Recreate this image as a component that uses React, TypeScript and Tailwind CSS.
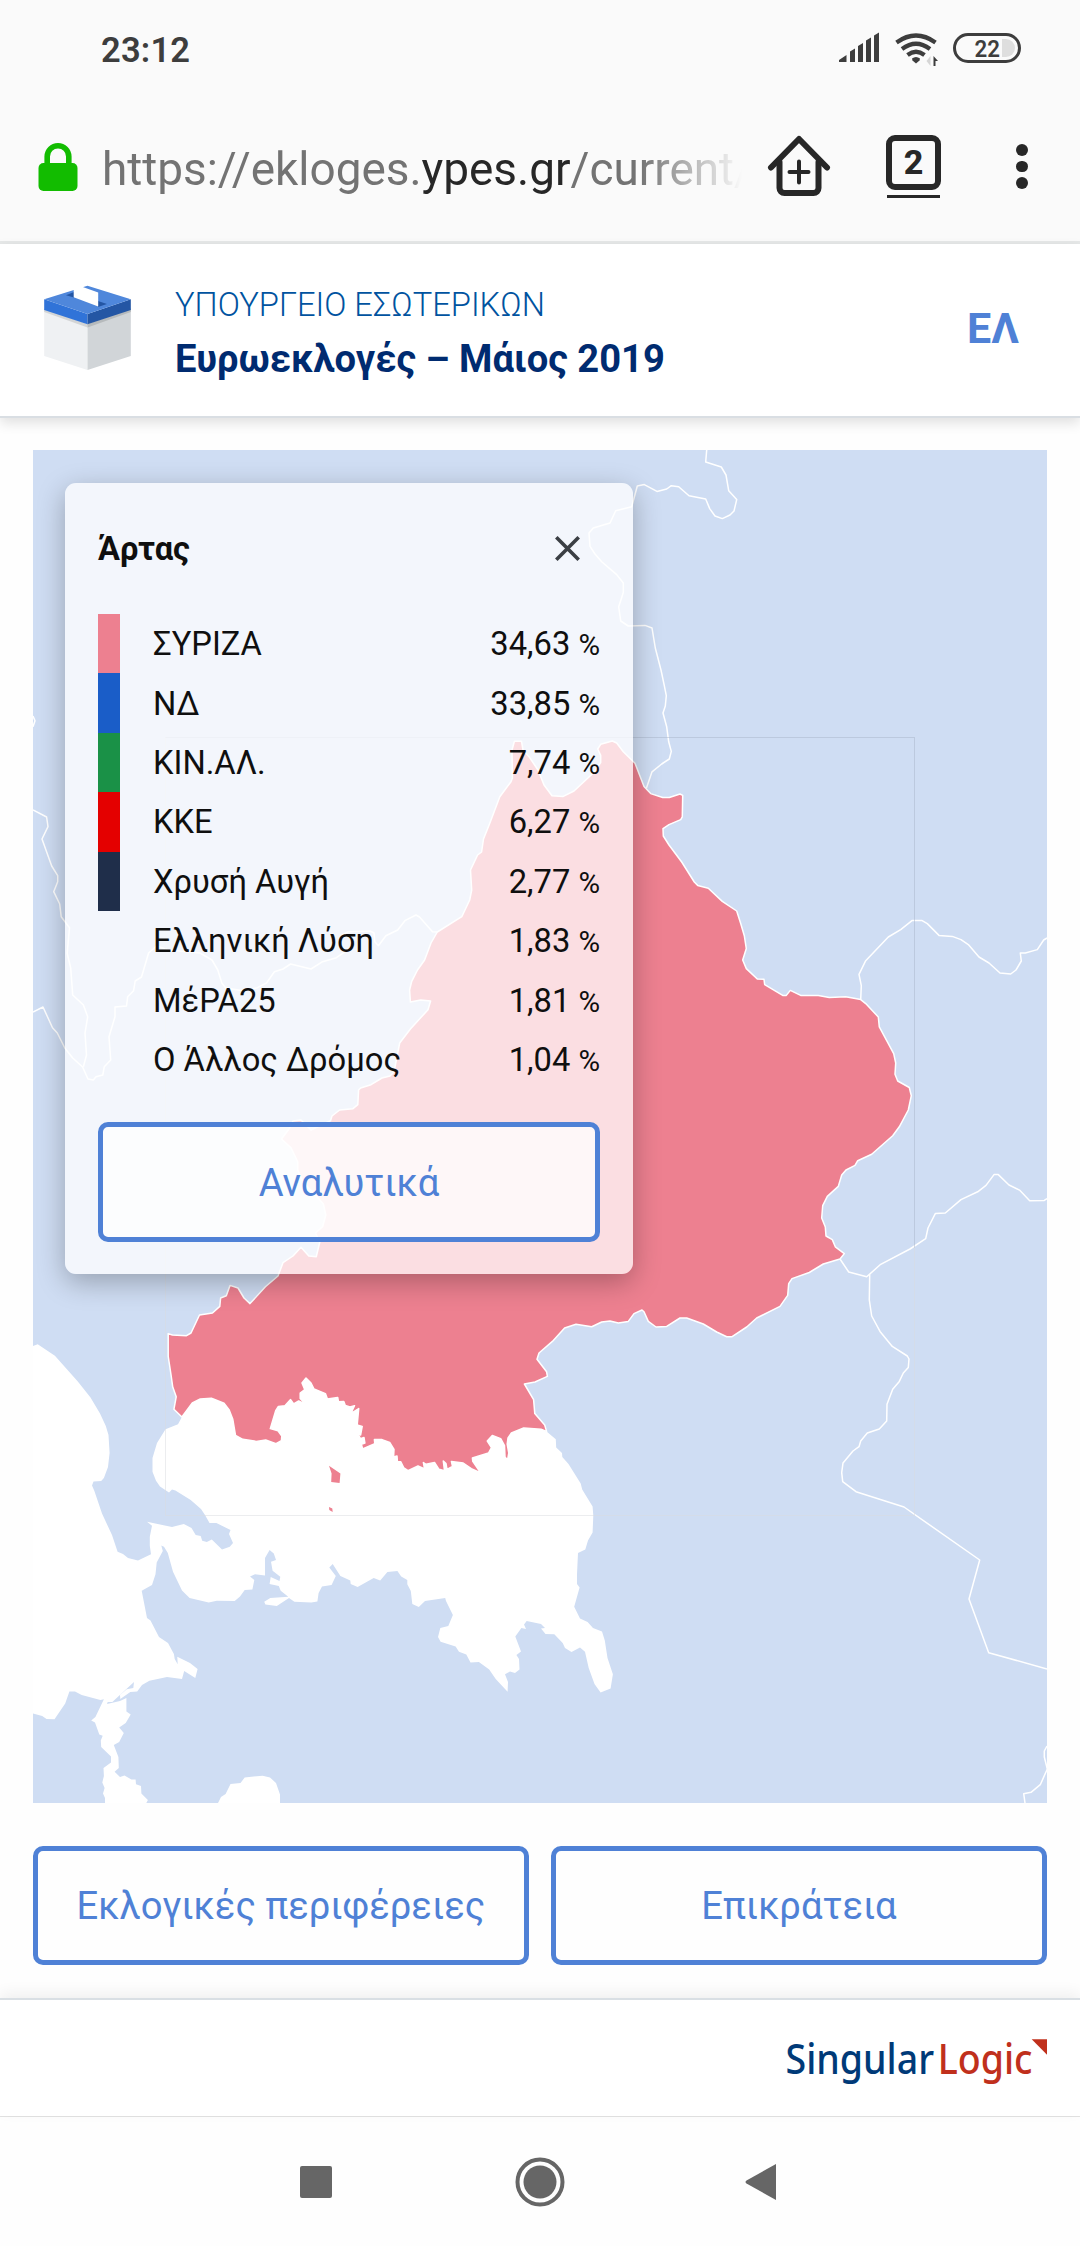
import { clsx } from "clsx";

type Result = {
  party: string;
  percent: string;
  color: string;
};

const results: Result[] = [
  { party: "ΣΥΡΙΖΑ", percent: "34,63", color: "bg-[#ed8090]" },
  { party: "ΝΔ", percent: "33,85", color: "bg-[#1a5dc8]" },
  { party: "ΚΙΝ.ΑΛ.", percent: "7,74", color: "bg-[#1a9147]" },
  { party: "ΚΚΕ", percent: "6,27", color: "bg-[#e40000]" },
  { party: "Χρυσή Αυγή", percent: "2,77", color: "bg-[#1f2e4a]" },
  { party: "Ελληνική Λύση", percent: "1,83", color: "" },
  { party: "ΜέΡΑ25", percent: "1,81", color: "" },
  { party: "Ο Άλλος Δρόμος", percent: "1,04", color: "" },
];

// selected district
const artas =
  "514.4,741.3 521.5,741.3 523,750 529,756.7 538,770 544,785 552,795.7 562.8,796.6 574,791 593.3,773 600.7,762.5 600.7,755.4 597.7,749 600.7,744.3 612.3,741 616.7,743 623.3,751.8 635,763.2 644,786.4 650.7,793.6 662.7,797.5 669.3,797.5 680,794 682.7,795.4 682.3,816.8 680.7,819.6 669,824.6 663,828.6 663.3,836 669,845 681.7,862 694.3,882 697.7,885.4 708.3,888.2 722.3,901.4 736.7,911 740.7,923.6 744.3,935.7 746.3,948.6 742.7,960 746.3,968.6 757.3,979 764,979.3 764.7,984.6 782.7,995.4 786.3,995.4 790.3,990.4 800.7,995.4 818.3,995.4 829.3,997.5 845.7,996.8 860.7,999.6 865.7,1003.6 878.3,1017 879.3,1026.8 893.7,1053.6 895.7,1063 895,1074.3 897.7,1081 909.3,1087.5 911.3,1095.7 908.3,1110 899.3,1126.8 892.7,1135.7 871.7,1154.3 857.7,1160.7 855,1165.4 846,1170 841.7,1175 838.3,1186.4 827.3,1196.4 822.7,1205.7 821.7,1218 825.3,1227 826,1236 832.3,1239.6 835.3,1246.8 844.3,1253.6 840,1259 823.3,1264 809.3,1272.5 792,1278.6 788.7,1283.6 787.7,1295.4 780,1306.4 756.7,1318 746.7,1327 731.7,1336.8 726.7,1336.8 716.7,1332 703.3,1324 686.7,1318 680,1318 666.7,1326.4 656,1327 648.3,1321.4 644,1311.8 642,1310 634,1313.6 628.3,1321.4 618.3,1323 610,1321 601.7,1322 591.7,1326.8 576,1324.3 564.6,1328 552.4,1341.4 539,1353 537,1359.3 546.6,1371.8 547.4,1376.4 535,1382 524.4,1384 533.6,1399.6 534.8,1413.6 544.7,1425 546.6,1431.4 541,1429.3 523.7,1428 511.4,1433 508,1438 507.2,1444 508.8,1453 507.6,1460 505,1457 504.5,1445.7 500.7,1438.6 492.3,1435.4 487.3,1441 491.5,1447.5 488.5,1453 472.4,1458 472.8,1461.4 480.8,1473 471.3,1468.6 463.2,1463 451.4,1461.4 452.5,1466.4 447,1469.3 446,1463.6 443.3,1461 444.5,1470.7 439,1469.3 434.5,1462.5 426,1464.3 423.4,1462.5 424.6,1469 418,1466 408,1470.7 403.9,1468 400.8,1461.8 397.4,1461.4 397,1456 393.6,1457 394,1449.3 389.7,1442.5 382,1439.6 374.4,1439.6 374.8,1443.6 362.6,1449 361.4,1444.3 364.9,1443 364,1437.5 360.3,1438.6 356.4,1430 360.6,1435 362.2,1426.4 357.2,1425 358.7,1408.6 350.7,1413.6 354.5,1405.7 350,1407 345.3,1405.4 343.8,1401.4 338.5,1401.8 337.7,1397.5 327.4,1399 325.4,1393.6 314,1389 311,1383 306,1378 302,1383 304.8,1389.6 300.2,1393.2 300.2,1398.6 305.5,1404.3 298.7,1401 293.7,1404 290.6,1399.6 284.9,1405.7 278.4,1406.4 275.7,1410.7 270.3,1428.6 278,1430.7 281.8,1436 281.4,1440.7 276,1443.6 265.7,1440 256.2,1441.4 242.8,1439.3 235.5,1435.4 232.8,1419.3 229,1409.6 224,1403.2 211.4,1398.2 200.3,1399 192.3,1403 181.9,1417 173.9,1409.3 176.2,1396.8 172.7,1386.8 171.2,1376 168.2,1356.4 168.2,1333.6 172.4,1335 186.5,1335.7 191,1333 199.5,1315 212.5,1313 219.8,1306.4 220.6,1298 226.3,1295.7 230,1285.4 238,1288 244,1298 250,1303.6 265.4,1286.8 278,1276 283,1262.7 293,1256 301,1247.3 308.8,1256 316.3,1256.7 319.8,1242 315.5,1233 322.6,1226.7 325.8,1215 323.4,1204 315.5,1195 303,1182 297.7,1170 297.7,1161.7 291,1147.7 281.5,1139 289,1129 293,1121 301,1120 311,1130 330.5,1120.7 332,1116 339.6,1110 353,1108.7 357.8,1104.7 358.6,1090 360.6,1088 371,1084.7 382,1078 390,1076 394,1072 399.7,1043 410.4,1029 428,1009.7 430.6,1001 420.7,1000 410.4,1002 409.6,990 411.6,981.7 417.5,970 424.6,960 431,943 437.3,932 461.8,916.7 469.7,900 471.7,890 470.5,870 477.6,855 481.6,852 483.5,839 489.9,823 499.8,796.7 511,781.7 512.4,778 512,750";

// Ionian sea and the gulf
const sea =
  "181.9,1417 178,1424.3 165.5,1429.3 157,1443 152.5,1458 152.5,1471.8 156,1480.7 160,1486.4 169,1492.5 172,1489.6 175.4,1490.4 190.7,1500 201,1509 205,1515 209.5,1523 216.4,1523 230.5,1530 229,1534 233,1543 229.8,1546.8 222,1549.6 211.8,1539.6 206.8,1542 202.2,1540.7 200.7,1536 195.7,1535 191.5,1528 183.8,1524 172,1527 147,1521.8 152,1525.7 149.8,1536.8 149.8,1545.7 151,1554.3 138,1560.4 128,1558 123,1554 117.6,1551.8 112,1535 102,1513.6 94.3,1490.7 92,1485.4 93.5,1481.4 101.2,1481 103.9,1478 108,1467 109.6,1453 108.5,1435 105.8,1426 100,1413.6 90.5,1397.5 77.8,1381.4 54.9,1355.7 37.7,1344.3 33,1346 33,1713.6 42.2,1716 46.5,1719 54.5,1719.3 65.2,1703.6 69.4,1691.4 75,1691.4 81.7,1695 100.4,1700 103.9,1699.3 95.4,1717 91.2,1720.4 95,1722.5 99.3,1734.6 102.7,1735.7 100.8,1740.4 101.2,1747 111,1756.4 111,1762.5 103.5,1768 103.9,1776 102.3,1782.5 104.6,1788 103,1793.6 105,1798 105,1803 146.3,1803 147.9,1800 141.4,1793.6 141,1786 136,1784.3 135.6,1779.6 131.4,1779.6 124.5,1775.4 120,1777 114.6,1771.8 118.8,1768 118.4,1757 113.8,1745 119.2,1742 123.8,1733 119.2,1727.5 125.7,1723 130.7,1714.6 126.4,1711.4 126.4,1698 120,1701 107,1704 107.7,1702 112.3,1702 124.5,1690.7 134,1682 133.3,1688 126.8,1689.3 120,1695 120.3,1699 130.3,1692 137.2,1691.4 142,1685 149.4,1680.7 167,1677 182,1679 184.2,1671 195.3,1678 197.6,1669 190,1663 177.3,1656.8 177.7,1664.3 174.7,1659 173.9,1654 168,1643 159,1637 150.5,1620.4 147,1618 141.7,1590.7 152,1585 155.5,1574.3 156.7,1562.5 162.8,1551 161.3,1545.4 164,1546.8 167.8,1553 173,1571.8 182,1590.4 189.6,1598 208.7,1602.5 216.8,1600.7 234.7,1601 240,1596.4 244.7,1590 252.4,1589.6 254.3,1580 250,1576.4 255,1574.3 265,1575.4 265,1558 269.6,1550 273.8,1553.6 276,1560 271,1561.8 272.6,1570.7 280.3,1576.8 279.5,1581 270.7,1577 269.6,1584 278.8,1586 280.7,1590.7 288.3,1596.8 270.3,1598 264.2,1601.8 265.4,1604.6 276.8,1606 289,1598 294.4,1601.8 311.3,1602.5 317.4,1601.4 318.6,1593 322,1586.4 331.6,1585 335.8,1576 329.3,1567.5 332.7,1564 340.4,1576 350.3,1580.4 350.7,1584 357.6,1587 373.7,1578 380.2,1580.4 387.4,1572 397.4,1571 401.2,1576.4 407.3,1580 407.3,1584.3 410.8,1591 412.3,1604 418.8,1607 425,1601 445.2,1598 446,1601 452.9,1615 448.3,1626 440.3,1628 438,1637 440.6,1641.8 455.6,1646.4 459,1651.8 466.3,1654.6 470.5,1662.5 478.9,1662 489.2,1669.6 495.7,1679 507.6,1691.8 508,1682 505,1674.3 510,1671.4 515,1673 519.5,1669.6 519,1659 516.4,1655 521,1651.4 515.3,1636.4 521.4,1628 526,1629 524,1624.6 526.7,1621 541,1624 545,1628 541,1628.6 545.5,1634 554.3,1634.3 562.7,1643 565,1648 571.5,1652 580,1647.5 585,1651.8 588.7,1668 594.5,1684 600.6,1692.5 610.6,1688.6 612.9,1674.3 607.5,1658 604.8,1640.4 602,1631.4 593,1628 587.6,1622 580,1618.6 574.2,1606.8 579.6,1587.5 577,1584 577,1574.3 578,1553 585.3,1549.6 588,1540.4 592.6,1532.5 593.3,1515.4 592.6,1506.4 582.2,1489.6 580.7,1483.6 568.5,1464 562.3,1457 562,1453 556.2,1447.5 555.8,1439.3 546.6,1431.4 520,1415 306,1368 200,1388";

const bay =
  "218,1803 221,1797 225.6,1794 230.5,1784 240.5,1783 244.7,1777.5 262.7,1775.7 270,1777.5 276,1783 280,1794.6 280,1803";

// borders between the neighbouring districts
const borders = [
  "33,716 35,720.7 33,726.7",
  "33,810 46.6,817 48,826.7 42,839 51.7,866 57.7,875.7 57.7,881.7 53.7,891.7 59.7,904 61.2,916.7 69.5,927.7 67.2,953.3 70.7,968 72.7,995 83.4,1005 87.7,1016.7 85,1033 86.5,1055 83.4,1066.7",
  "33,1012 43,1007 52.5,1027.7 57.3,1033 64.8,1048 72.7,1058 82.6,1067 88,1079 93.3,1080 96,1076.7 102.8,1075 104.3,1066.7 110.7,1060 109,1036.7 115,1016.7 115,1007 126.5,1006 127.7,996.7 133.6,990.7 135.2,981 141.5,977 148.6,953 156.5,946 168.4,950 200,953 212,960 217.8,970 221.8,983 225.7,988 243.5,990.7 257.4,987.7 266.5,983 274.4,971.7 283,969 290.6,964 311,969 322.6,961.7 336.4,957.7 349,949",
  "437.3,932 432.5,931.7 419.5,917 416,915 404.9,920.7 397.7,930 385.9,935.7 378.4,945.7 374.8,941.7 374,933 370,931 348.3,931.7 342,935",
  "706.7,450 705.7,462 721.3,467 726,475 728.7,490.7 736.7,499.6 734,511 730,515 722.3,518.6 715,516 709.7,508.6 705.7,499 689,495.7 678.7,486.8 671.3,485.7 666.7,489 657,491.4 644.3,484.6 637.3,486 631.7,506.8 615.7,510.7 610,523 593.3,528 589,533 590,546.4 595,554 601.7,561.8 616.7,574.6 623.3,583 623.3,592.5 618.7,606.8 620.7,621 628.3,626 645,625.4 652,628 655.3,648 661,670 664.3,685.7 666.3,695.7 665.3,706 663,713 666.7,726.8 668.7,741.8 671.3,751.4 669.3,759 661.7,764 652,771.8 646.3,788.6",
  "860.7,999.6 861.3,985.7 859,974.3 865.7,960.7 888.3,937 900.7,929.6 912.3,920.4 921.7,920.4 927.3,923.6 939,935.4 952.3,936.4 961,939.6 968.3,944.6 979,957 989,963 1000,973 1010.7,974 1016,970 1021.3,961 1020.3,953 1025.3,953 1037.3,949.6 1043.7,940 1047,938",
  "840,1259 848.7,1272 866.7,1276.8 880.7,1264.3 910,1249 925.7,1238.6 928,1228 935.3,1213.6 945.3,1213 961,1199.6 977.7,1191.8 986,1185.4 994,1174.6 998.3,1174.6 1009,1185 1020,1190.4 1029.7,1200.7 1044.3,1200.4 1047,1198.6",
  "869.7,1274.3 869.3,1300 871.7,1316 880,1331.4 892.3,1346.4 907.3,1356 909,1359 908.3,1367.5 903.3,1373 899.3,1381.4 892.7,1389.3 887,1404.3 886.7,1421 879.3,1429 867.3,1433 860.7,1441 859,1446.7 853,1451 843,1463 841.7,1472.7 842.7,1481.7 856,1491.7 904,1507 979.7,1560 969,1599 988.7,1652.7 1047,1669",
  "1047,1746 1044.3,1751 1044.3,1757 1047.3,1769 1040.3,1784.7 1031,1792.3 1023.7,1793.7 1025,1803",
];

function StatusBar() {
  return (
    <div className="flex h-[96px] items-center justify-between pl-[101px] pr-[59px] pt-[2px] text-[#3d3d3d]">
      <span className="mt-[2px] text-[34.5px] font-semibold leading-none tracking-[0.2px]">
        23:12
      </span>
      <svg width="183" height="36" viewBox="838 31 183 36" fill="none">
        <g fill="#3d3d3d">
          <path d="M839 60 846.500 55v7h-7.500zM850 51.500l5-3v13.500h-5zM858 46l5-3v19h-5zM866 40.500l5-3v24.500h-5zM874 35.500l5-3v29.500h-5z" />
          <path d="M912 58.500q4-3 8 0l-.5 2-3.500 3-3.500-3z" />
        </g>
        <path
          d="M896.500 42.500q19.500-14 39 0M902 49q14-10.500 28 0M907.500 55q8.500-6.500 17 0"
          stroke="#3d3d3d"
          strokeWidth="4.200"
        />
        <path d="M930.500 56v10l-4-5z" fill="#d6d6d6" />
        <path d="M933.500 66V56l4.500 5h-2.500v5z" fill="#3d3d3d" />
        <rect x="954.500" y="34.500" width="65" height="27" rx="13.500" stroke="#3d3d3d" strokeWidth="3" />
        <path d="M1002 39h4a9 9 0 0 1 0 18h-4z" fill="#dedede" />
        <text x="974.500" y="56.700" fontSize="24" fontWeight="600" fill="#3d3d3d" textLength="25.500" lengthAdjust="spacingAndGlyphs">
          22
        </text>
      </svg>
    </div>
  );
}

function AddressBar() {
  return (
    <div className="flex h-[148px] items-center border-b-[3px] border-[#e6e8e8] pb-[6px] text-[#272727]">
      <svg className="ml-[38px]" width="40" height="52" viewBox="0 0 40 52">
        <path d="M9.200 25V16.500a10.800 10.800 0 0 1 21.600 0V25" fill="none" stroke="#12bc00" strokeWidth="5.600" />
        <rect x="0.500" y="23" width="39" height="28" rx="5" fill="#12bc00" />
      </svg>
      <div className="ml-[24px] mt-[7px] w-[640px] overflow-hidden whitespace-nowrap text-[45.900px] leading-[60px] text-[#737373] [mask-image:linear-gradient(to_right,black_84%,transparent_100%)]">
        https://ekloges.<span className="text-[#272727]">ypes.gr</span>/current/
      </div>
      <svg className="ml-[25px]" width="64" height="62" viewBox="0 0 64 62" fill="none" stroke="#272727" strokeLinecap="round" strokeLinejoin="round">
        <path d="M4 32.500 32 4l28 28.500" strokeWidth="6" />
        <path d="M12.500 27v26a5 5 0 0 0 5 5h29a5 5 0 0 0 5-5V27" strokeWidth="6" />
        <path d="M32 26.500v21M22.500 37h19" strokeWidth="4" />
      </svg>
      <div className="ml-[55px] flex flex-col items-center pt-[1px]">
        <div className="flex h-[55px] w-[55px] items-center justify-center rounded-[9px] border-[6px] border-[#272727] text-[34px] font-extrabold leading-none">
          2
        </div>
        <div className="mt-[5px] h-[3px] w-[53px] bg-[#272727]" />
      </div>
      <div className="ml-[75px] mt-[2px] flex flex-col gap-[5px]">
        <span className="h-[11.500px] w-[11.500px] rounded-full bg-[#272727]" />
        <span className="h-[11.500px] w-[11.500px] rounded-full bg-[#272727]" />
        <span className="h-[11.500px] w-[11.500px] rounded-full bg-[#272727]" />
      </div>
    </div>
  );
}

function BallotBox() {
  return (
    <svg className="mb-[4px]" width="88" height="86" viewBox="44 285 88 86">
      <path d="M44.200 308 87.500 323v47L44.200 356z" fill="#eff1f3" />
      <path d="M130.800 308 87.500 323v47l43.300-14z" fill="#d1d5d8" />
      <path d="M44.200 309v3l43.300 15.500V324z" fill="#d3d5d6" />
      <path d="M130.800 309v3L87.500 327.500V324z" fill="#b6babc" />
      <path d="M44.200 299.300 87.500 314v10.300L44.200 310z" fill="#3073d8" />
      <path d="M130.800 299.300 87.500 314v10.300L130.800 310z" fill="#2456a4" />
      <path d="M87.500 285.700 130.800 299.300 87.500 314 44.200 299.300z" fill="#4f87db" />
      <path d="M66 295.300 74 292v5.500zM98 301l9 3-9 3z" fill="#2456a4" />
      <path d="M73.700 285.500 80 286 98.200 292.400v14L73.700 297.300z" fill="#fff" />
    </svg>
  );
}

function SiteHeader() {
  return (
    <header className="relative flex h-[174px] items-center border-b-2 border-[#d9dee3] bg-white pl-[44px] pr-[61px] shadow-[0_5px_12px_rgba(0,0,0,0.12)]">
      <BallotBox />
      <div className="ml-[43px] flex-1 pt-[7px]">
        <div className="text-[32.700px] font-light leading-[42px] text-[#0053a0]">
          ΥΠΟΥΡΓΕΙΟ ΕΣΩΤΕΡΙΚΩΝ
        </div>
        <h1 className="mt-[8px] text-[38.150px] font-bold leading-[50px] text-[#002b70]">
          Ευρωεκλογές – Μάιος 2019
        </h1>
      </div>
      <button className="mb-[3px] text-[43px] font-bold leading-none text-[#4f81d6]">ΕΛ</button>
    </header>
  );
}

function DistrictMap() {
  return (
    <svg className="block" width="1014" height="1353" viewBox="33 450 1014 1353">
      <rect x="33" y="450" width="1014" height="1353" fill="#cfddf3" />
      <polygon points={sea} fill="#fff" />
      <polygon points={bay} fill="#fff" />
      <g fill="none" stroke="#fff" strokeWidth="1.500" strokeLinejoin="round">
        {borders.map((points) => (
          <polyline key={points} points={points} />
        ))}
      </g>
      <polygon points={artas} fill="#ed8090" stroke="#fff" strokeWidth="1.500" strokeLinejoin="round" />
      <path d="M329 1465.700 340.400 1473.600 339.600 1483 331.200 1482 331.600 1473.600zM329 1507l3.300 1.600.4 3.400-3.400-2z" fill="#ed8090" />
      <g fill="none" strokeDasharray="1 1">
        <path d="M165.500 737.500h749v510" stroke="#a9b5c8" />
        <path d="M165.500 737.500v778h749v-268" stroke="#d8dade" />
      </g>
    </svg>
  );
}

function OutlineButton({ label, className }: { label: string; className?: string }) {
  return (
    <button
      className={clsx(
        "flex items-center justify-center rounded-[10px] border-[5px] border-[#4f81d6] pt-[2px] text-[38.150px] leading-none text-[#4f81d6]",
        className,
      )}
    >
      {label}
    </button>
  );
}

function ResultsCard() {
  return (
    <div className="absolute left-[32px] top-[33px] h-[791px] w-[568px] rounded-[11px] bg-white/74 px-[33px] shadow-[0_8px_28px_rgba(0,0,0,0.28)]">
      <div className="flex h-[131px] items-center justify-between pr-[20px]">
        <h2 className="pt-[2px] text-[32.700px] font-bold text-[#0f0f0f]">Άρτας</h2>
        <svg width="25" height="25" viewBox="0 0 25 25" stroke="#3b3f44" strokeWidth="3.600">
          <path d="M1.300 1.300 23.700 23.700M23.700 1.300 1.300 23.700" />
        </svg>
      </div>
      <ul>
        {results.map((r) => (
          <li key={r.party} className="flex h-[59.400px] items-center text-[32.700px] text-[#0f0f0f]">
            <span className={clsx("h-full w-[22px]", r.color)} />
            <span className="ml-[33px] flex-1 pt-[2px]">{r.party}</span>
            <span className="pt-[2px]">
              {r.percent} <span className="text-[29.500px]">%</span>
            </span>
          </li>
        ))}
      </ul>
      <OutlineButton label="Αναλυτικά" className="mt-[32.800px] h-[120px] w-full bg-white/75" />
    </div>
  );
}

function Footer() {
  return (
    <footer className="relative flex h-[118px] items-center justify-end border-t-2 border-[#d9dfe4] bg-white pr-[33px] shadow-[0_-5px_14px_rgba(0,0,0,0.06)]">
      <svg
        className="overflow-visible font-['Noto_Sans',sans-serif]"
        width="262"
        height="80"
        viewBox="785 2018 262 80"
      >
        <text x="785.500" y="2073.800" fontSize="42" fontWeight="500" textLength="247" lengthAdjust="spacingAndGlyphs">
          <tspan fill="#003a78">Singular</tspan>
          <tspan fill="#c0301c" dx="4">
            Logic
          </tspan>
        </text>
        <path d="M1031.700 2039.300H1047v15.400z" fill="#c0301c" />
      </svg>
    </footer>
  );
}

function NavBar() {
  return (
    <nav className="flex h-[130px] items-center border-t border-[#e2e2e2] bg-[#fefefe] pl-[300px]">
      <span className="h-[32px] w-[32px] rounded-[2px] bg-[#666]" />
      <svg className="ml-[183px]" width="50" height="50" viewBox="0 0 50 50">
        <circle cx="25" cy="25" r="22.500" fill="none" stroke="#666" strokeWidth="4" />
        <circle cx="25" cy="25" r="16.500" fill="#666" />
      </svg>
      <svg className="ml-[179px]" width="33" height="38" viewBox="0 0 33 38">
        <path d="M32 1v36L2.500 20.500q-2-1.500 0-3z" fill="#666" />
      </svg>
    </nav>
  );
}

export default function App() {
  return (
    <div className="h-[2246px] w-[1080px] overflow-hidden bg-[#fefefe] font-['Roboto',sans-serif]">
      <div className="bg-[#fafafa]">
        <StatusBar />
        <AddressBar />
      </div>
      <SiteHeader />
      <main className="h-[1580px] px-[33px] pt-[32px]">
        <div className="relative">
          <DistrictMap />
          <ResultsCard />
        </div>
        <div className="mt-[43px] grid grid-cols-2 gap-[22px]">
          <OutlineButton label="Εκλογικές περιφέρειες" className="h-[119px]" />
          <OutlineButton label="Επικράτεια" className="h-[119px]" />
        </div>
      </main>
      <Footer />
      <NavBar />
    </div>
  );
}
